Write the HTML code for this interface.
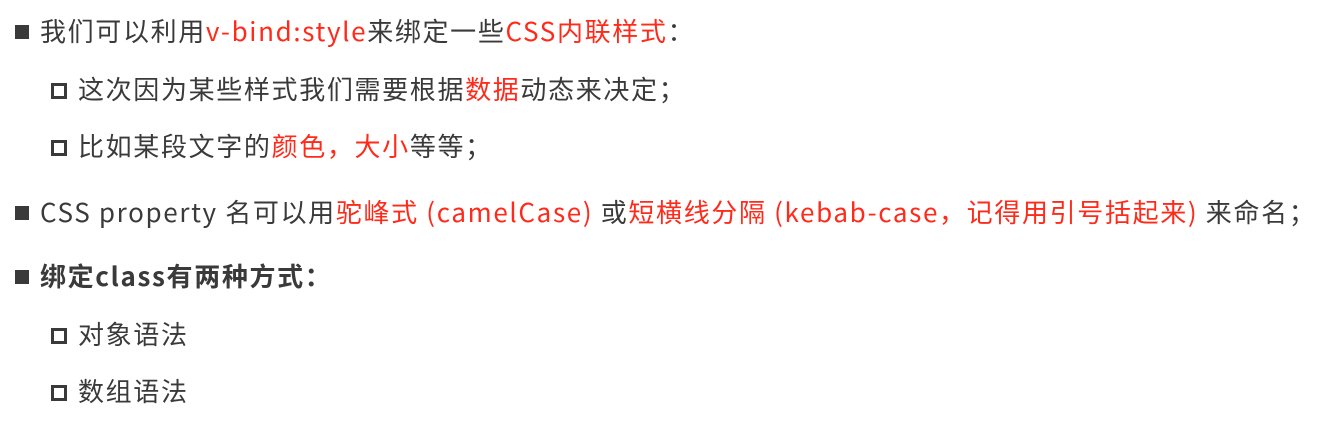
<!DOCTYPE html>
<html><head><meta charset="utf-8"><style>
body{margin:0;width:1340px;height:439px;background:#fff;overflow:hidden;font-family:"Noto Sans CJK SC","Liberation Sans",sans-serif;color:#3a3a3a;font-size:26px;letter-spacing:1.65px;}
.l{position:absolute;white-space:nowrap;line-height:30px;}
.r{color:#ff2a1a}
.b1{position:absolute;width:14px;height:14px;background:#3a3a3a}
.b2{position:absolute;width:10px;height:10px;border:3px solid #3a3a3a}
</style></head><body>
<div class="b1" style="left:15px;top:25px"></div>
<div class="l" style="left:40px;top:16px">我们可以利用<span class="r">v-bind:style</span>来绑定一些<span class="r">CSS内联样式</span>：</div>
<div class="b2" style="left:51px;top:83px"></div>
<div class="l" style="left:78px;top:74px">这次因为某些样式我们需要根据<span class="r">数据</span>动态来决定；</div>
<div class="b2" style="left:51px;top:140px"></div>
<div class="l" style="left:78px;top:131px">比如某段文字的<span class="r">颜色，大小</span>等等；</div>
<div class="b1" style="left:15px;top:206px"></div>
<div class="l" style="left:40px;top:197px">CSS property 名可以用<span class="r">驼峰式 (camelCase)</span> 或<span class="r">短横线分隔 (kebab-case，记得用引号括起来)</span> 来命名；</div>
<div class="b1" style="left:15px;top:270px"></div>
<div class="l" style="left:40px;top:261px;font-weight:bold">绑定class有两种方式：</div>
<div class="b2" style="left:51px;top:328px"></div>
<div class="l" style="left:78px;top:319px">对象语法</div>
<div class="b2" style="left:51px;top:385px"></div>
<div class="l" style="left:78px;top:376px">数组语法</div>
</body></html>
